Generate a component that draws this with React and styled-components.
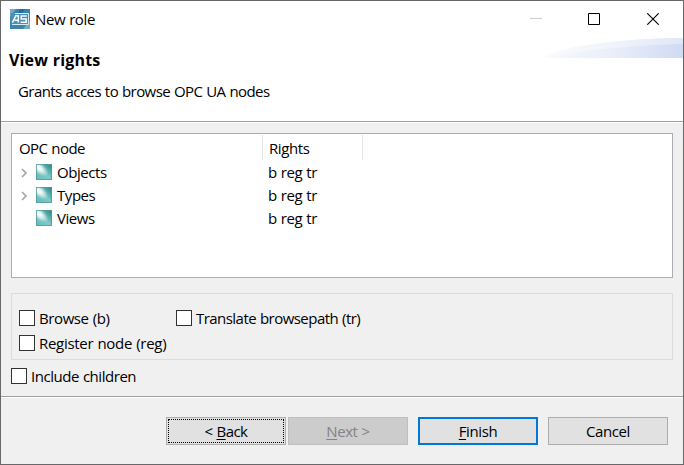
import React from "react";
import styled, { createGlobalStyle } from "styled-components";

const GlobalStyle = createGlobalStyle`
  * { box-sizing: border-box; }
  html, body { margin: 0; padding: 0; overflow: hidden; }
  body { background: #68666c; }
`;

const Window = styled.div`
  width: 684px;
  height: 465px;
  border: 1px solid #68686b;
  background: #f0f0f0;
  color: #000;
  font: 15px/20px "Open Sans", "Noto Sans", sans-serif;
  white-space: nowrap;
  display: flex;
  flex-direction: column;
`;

const Text = styled.span`
  letter-spacing: ${(p) => p.$spacing ?? -0.4}px;
  word-spacing: 0.5px;
`;

const TitleBar = styled.header`
  height: 37px;
  background: #fff;
  display: flex;
  align-items: center;
  padding: 0 24px 2px 9px;
`;

const AppIcon = styled.svg`
  width: 20px;
  height: 20px;
  margin-right: 5px;
`;

const WindowControls = styled.div`
  margin-left: auto;
  display: grid;
  grid-template-columns: 58px 59px 12px;

  svg {
    display: block;
    width: 12px;
    height: 12px;
  }
`;

const Banner = styled.section`
  height: 84px;
  background: #fff;
  border-bottom: 1px solid #a0a0a0;
  display: flex;
  justify-content: space-between;
`;

const BannerText = styled.div`
  padding: 11px 0 0 8px;
`;

const Heading = styled.h1`
  margin: 0;
  font-size: 16px;
  line-height: 22px;
  font-weight: 700;
`;

const Description = styled.p`
  margin: 10px 0 0 9px;
`;

const Swoosh = styled.svg`
  width: 141px;
  height: 20px;
`;

const Content = styled.main`
  height: 275px;
  border-top: 1px solid #fff;
  border-bottom: 1px solid #a0a0a0;
  padding: 10px 10px 0;
`;

const Tree = styled.div`
  height: 145px;
  background: #fff;
  border: 1px solid #abadb3;
  padding-top: 1px;
`;

const TreeHeader = styled.div`
  display: grid;
  grid-template-columns: 251px 100px;
  height: 25px;
`;

const HeaderCell = styled.div`
  border-right: 1px solid #e5e5e5;
  padding: 3px 0 0 ${(p) => p.$inset}px;
`;

const TreeRow = styled.div`
  display: grid;
  grid-template-columns: 24px 21px 211px 1fr;
  height: 23px;
  align-items: center;

  svg { display: block; }
`;

const Expander = styled.svg`
  width: 6px;
  height: 10px;
  margin-left: 9px;
  margin-top: 2px;
`;

const Group = styled.div`
  margin-top: 15px;
  height: 67px;
  border: 1px solid #dcdcdc;
  padding: 14px 7px 0;
  display: grid;
  grid-template-columns: 157px 1fr;
  grid-auto-rows: 25px;
`;

const Option = styled.label`
  display: flex;
  align-items: center;
  gap: 4px;
  height: 20px;
`;

const Box = styled.input`
  appearance: none;
  width: 16px;
  height: 16px;
  margin: 0;
  background: #fff;
  border: 1px solid #333;
`;

const IncludeRow = styled.div`
  margin-top: 6px;
`;

const Footer = styled.footer`
  flex: 1;
  border-top: 1px solid #fff;
  display: flex;
  justify-content: flex-end;
  padding: 19px 15px 0 0;
`;

const Button = styled.button`
  width: 120px;
  height: 28px;
  padding: 0;
  margin-left: ${(p) => p.$gap ?? 0}px;
  font: inherit;
  color: #000;
  background: #e1e1e1;
  border: 1px solid #adadad;
  ${(p) => p.$primary && "border: 2px solid #0078d7;"}
  ${(p) => p.$focused && "outline: 1px dotted #000; outline-offset: -3px;"}
  &:disabled {
    color: #838383;
    background: #ccc;
    border-color: #bfbfbf;
  }

  u { text-decoration-thickness: 1px; text-underline-offset: 2px; }
`;

function Logo() {
  return (
    <AppIcon viewBox="0 0 20 20">
      <rect width="20" height="20" fill="#3985ad" />
      <path d="M0 0h6L0 8zM13 20h7v-9z" fill="#72abc7" />
      <path d="M10 0h5l-3 4H8z" fill="#286b98" />
      <rect x="1" y="4" width="18" height="12" fill="#4a90b5" />
      <path d="M2.4 13.6L5.8 6.8h2.5v6.8M4.6 11.3h3.7M16.8 7h-5.6v3h5v3.2h-5.6" fill="none" stroke="#f7fcff" strokeWidth="1.5" />
      <path d="M5 4.5h13.5v11H2" fill="none" stroke="#dbe9f1" />
    </AppIcon>
  );
}

function NodeIcon() {
  return (
    <svg width="16" height="16" viewBox="0 0 16 16">
      <defs>
        <linearGradient id="nodeBase" x1="0" y1="1" x2="1" y2="0">
          <stop offset="0" stopColor="#5dbcbb" />
          <stop offset=".5" stopColor="#80c9c7" />
          <stop offset="1" stopColor="#217f7e" />
        </linearGradient>
        <radialGradient id="nodeShine" gradientUnits="userSpaceOnUse" cx="0" cy="0" r="1" gradientTransform="translate(3 4) rotate(40) scale(11 5.5)">
          <stop offset="0" stopColor="#fff" />
          <stop offset=".3" stopColor="#fff" stopOpacity=".85" />
          <stop offset="1" stopColor="#fff" stopOpacity="0" />
        </radialGradient>
      </defs>
      <rect width="16" height="16" fill="url(#nodeBase)" />
      <rect width="16" height="16" fill="url(#nodeShine)" />
      <rect x=".5" y=".5" width="15" height="15" fill="none" stroke="#569b9b" strokeOpacity=".8" />
    </svg>
  );
}

function Check({ label, spacing }) {
  return (
    <Option>
      <Box type="checkbox" />
      <Text $spacing={spacing}>{label}</Text>
    </Option>
  );
}

const nodes = [
  { name: "Objects", expandable: true },
  { name: "Types", expandable: true },
  { name: "Views", expandable: false },
];

export default function App() {
  return (
    <>
      <GlobalStyle />
      <Window>
        <TitleBar>
          <Logo />
          <Text>New role</Text>
          <WindowControls>
            <svg viewBox="0 0 12 12"><path d="M0 5.5h12" stroke="#ccc" /></svg>
            <svg viewBox="0 0 12 12"><path d="M.5.5h11v11H.5z" fill="none" stroke="#000" /></svg>
            <svg viewBox="0 0 12 12"><path d="M.3.3l11.4 11.4M11.7.3L.3 11.7" stroke="#000" strokeWidth="1.1" /></svg>
          </WindowControls>
        </TitleBar>
        <Banner>
          <BannerText>
            <Heading><Text $spacing={0.15}>View rights</Text></Heading>
            <Description><Text $spacing={-0.56}>Grants acces to browse OPC UA nodes</Text></Description>
          </BannerText>
          <Swoosh viewBox="0 0 141 20">
            <defs>
              <linearGradient id="swoosh">
                <stop offset="0" stopColor="#f8fafd" />
                <stop offset=".5" stopColor="#e9eef9" />
                <stop offset="1" stopColor="#d0daf4" />
              </linearGradient>
            </defs>
            <path d="M0 20C12 12 55 1 141 0v20z" fill="url(#swoosh)" />
            <path d="M0 20C12 12 55 1 141 0v6C90 7 45 12 0 20z" fill="#fff" opacity=".35" />
          </Swoosh>
        </Banner>
        <Content>
          <Tree>
            <TreeHeader>
              <HeaderCell $inset={7}><Text $spacing={-0.55}>OPC node</Text></HeaderCell>
              <HeaderCell $inset={6}><Text>Rights</Text></HeaderCell>
            </TreeHeader>
            {nodes.map((n) => (
              <TreeRow key={n.name}>
                {n.expandable ? (
                  <Expander viewBox="0 0 6 10"><path d="M1 1l4 4-4 4" fill="none" stroke="#a6a6a6" strokeWidth="1.7" /></Expander>
                ) : <span />}
                <NodeIcon />
                <Text $spacing={-0.45}>{n.name}</Text>
                <Text $spacing={-0.4}>b reg tr</Text>
              </TreeRow>
            ))}
          </Tree>
          <Group>
            <Check label="Browse (b)" />
            <Check label="Translate browsepath (tr)" spacing={-0.54} />
            <Check label="Register node (reg)" spacing={-0.29} />
          </Group>
          <IncludeRow><Check label="Include children" spacing={-0.46} /></IncludeRow>
        </Content>
        <Footer>
          <Button $focused><Text $spacing={-0.55}>&lt; <u>B</u>ack</Text></Button>
          <Button $gap={2} disabled><Text>
            <u>N</u>ext &gt;</Text></Button>
          <Button $gap={10} $primary><Text><u>F</u>inish</Text></Button>
          <Button $gap={10}><Text>Cancel</Text></Button>
        </Footer>
      </Window>
    </>
  );
}
